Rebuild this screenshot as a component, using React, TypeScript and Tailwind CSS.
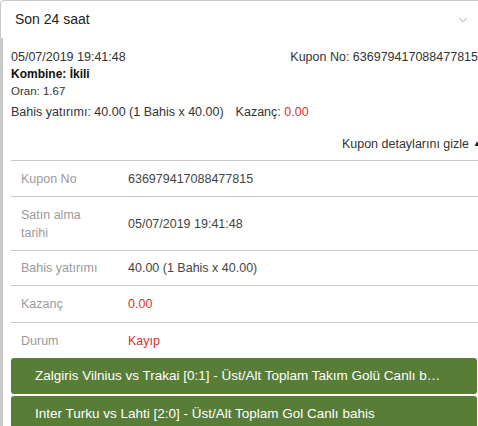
import React from "react";
import { ChevronDown } from "lucide-react";

const rows: { label: React.ReactNode; value: string; red?: boolean; h: string }[] = [
  { label: "Kupon No", value: "636979417088477815", h: "h-[36px]" },
  { label: <>Satın alma<br />tarihi</>, value: "05/07/2019 19:41:48", h: "h-[54px]" },
  { label: "Bahis yatırımı", value: "40.00 (1 Bahis x 40.00)", h: "h-[35px]" },
  { label: "Kazanç", value: "0.00", red: true, h: "h-[37px]" },
  { label: "Durum", value: "Kayıp", red: true, h: "h-[35px]" },
];

const events = [
  "Zalgiris Vilnius vs Trakai [0:1] - Üst/Alt Toplam Takım Golü Canlı bahis",
  "Inter Turku vs Lahti [2:0] - Üst/Alt Toplam Gol Canlı bahis",
];

const App = () => {
  return (
    <div className="w-[478px] h-[426px] overflow-hidden bg-white text-[#333] font-['Liberation_Sans',sans-serif]">
      <div className="w-[490px]">
        <div className="h-[38px] flex items-center justify-between border-t border-l border-[#c8c8c8] rounded-tl-[4px] pl-[14px] pr-[20px] text-[14px] text-[#222]">
          <span>Son 24 saat</span>
          <ChevronDown size={14} strokeWidth={1.5} className="text-[#999]" />
        </div>
        <div className="border-l-[3px] border-[#c8c8c8] pl-[8px] pt-[10px]">
          <div className="flex justify-between text-[12.5px] leading-[18px] pr-[12px]">
            <span>05/07/2019 19:41:48</span>
            <span>Kupon No: 636979417088477815</span>
          </div>
          <div className="text-[12px] leading-[17px] font-bold text-[#111]">Kombine: İkili</div>
          <div className="text-[11.5px] leading-[17px]">Oran: 1.67</div>
          <div className="mt-[3px] text-[12.5px] leading-[18px]">
            Bahis yatırımı: 40.00 (1 Bahis x 40.00)
            <span className="ml-[12px]">Kazanç: </span>
            <span className="text-[#d9302c]">0.00</span>
          </div>
          <div className="mt-[14px] flex justify-end items-center gap-[4px] pr-[9px] text-[12.5px] leading-[18px]">
            <span>Kupon detaylarını gizle</span>
            <span className="text-[8px] text-[#222]">▲</span>
          </div>
          <div className="mt-[7px] border-t border-[#c8c8c8]">
            {rows.map((r, i) => (
              <div
                key={i}
                className={`flex items-center text-[12.5px] leading-[18px] pl-[10px] ${r.h} ${i < rows.length - 1 ? "border-b border-[#c8c8c8]" : ""}`}
              >
                <div className="w-[107px] text-[#9a9a9a]">{r.label}</div>
                <div className={r.red ? "text-[#d9302c]" : "text-[#444]"}>{r.value}</div>
              </div>
            ))}
          </div>
          <div className="flex flex-col gap-[2px] w-[466px]">
            {events.map((e) => (
              <div
                key={e}
                className="h-[36px] flex items-center bg-[#577d37] rounded-[3px] pl-[24px] pr-[31px] text-white text-[13.5px] font-['Liberation_Sans',Arial,sans-serif]"
              >
                <span className="truncate">{e}</span>
              </div>
            ))}
          </div>
        </div>
      </div>
    </div>
  );
};

export default App;
